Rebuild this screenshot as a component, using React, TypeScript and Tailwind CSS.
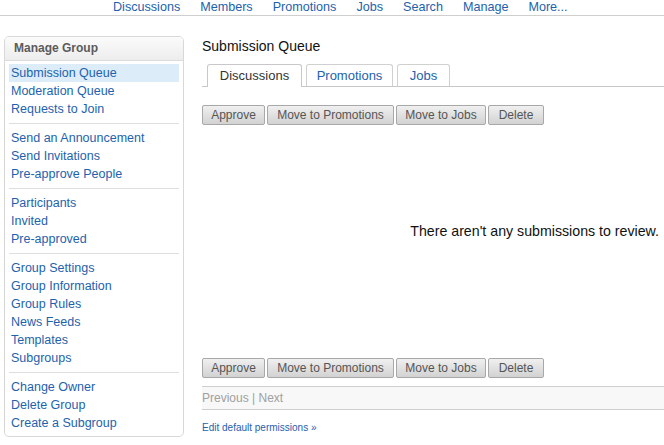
import React from "react";

const navItems = ["Discussions", "Members", "Promotions", "Jobs", "Search", "Manage", "More..."];

const groups = [
  ["Submission Queue", "Moderation Queue", "Requests to Join"],
  ["Send an Announcement", "Send Invitations", "Pre-approve People"],
  ["Participants", "Invited", "Pre-approved"],
  ["Group Settings", "Group Information", "Group Rules", "News Feeds", "Templates", "Subgroups"],
  ["Change Owner", "Delete Group", "Create a Subgroup"],
];

function ActionButtons() {
  const btn =
    "h-[20px] border border-[#a8a8a8] rounded-[2px] bg-gradient-to-b from-[#f0f0f0] to-[#d2d2d2] text-[12px] leading-[18px] text-[#555] text-center";
  return (
    <div className="flex gap-[2px]">
      <button className={`${btn} w-[63px]`}>Approve</button>
      <button className={`${btn} w-[127px]`}>Move to Promotions</button>
      <button className={`${btn} w-[90px]`}>Move to Jobs</button>
      <button className={`${btn} w-[56px]`}>Delete</button>
    </div>
  );
}

export default function App() {
  return (
    <div className="w-[664px] h-[445px] overflow-hidden bg-white font-['Liberation_Sans',Arial,sans-serif]">
      <nav className="h-[16px] border-b border-[#cfcfcf] flex gap-[20px] pl-[113px] text-[12.6px] leading-[14px] text-[#1d62ad]">
        {navItems.map((n) => (
          <a key={n} href="#" className="hover:underline">
            {n}
          </a>
        ))}
      </nav>

      <div className="flex pt-[20px] pl-[4px]">
        <aside className="w-[180px] h-[401px] shrink-0 border border-[#d8d8d8] rounded-[5px] overflow-hidden">
          <div className="h-[24px] border-b border-[#dcdcdc] bg-gradient-to-b from-[#fbfbfb] to-[#ededed] pl-[9px] text-[12px] font-bold leading-[23px] text-[#5b5b5b]">
            Manage Group
          </div>
          <div className="px-[4px] pt-[3px]">
            {groups.map((g, gi) => (
              <div key={gi}>
                {gi > 0 && <div className="my-[5px] h-px bg-[#dedede]" />}
                {g.map((item) => (
                  <a
                    key={item}
                    href="#"
                    className={`block h-[18px] pl-[2px] text-[12.5px] leading-[18px] text-[#1d62ad] ${
                      item === "Submission Queue" ? "bg-[#dcedf9]" : ""
                    }`}
                  >
                    {item}
                  </a>
                ))}
              </div>
            ))}
          </div>
        </aside>

        <main className="ml-[18px] flex-1">
          <h1 className="h-[20px] text-[14px] leading-[20px] text-[#111]">Submission Queue</h1>

          <div className="mt-[8px] flex items-end gap-[4px] pl-[5px] border-b border-[#c8c8c8] h-[23px]">
            <div className="w-[95px] h-[23px] -mb-px border border-b-0 border-[#c8c8c8] rounded-t-[3px] bg-white text-center text-[13px] leading-[22px] text-[#333]">
              Discussions
            </div>
            <a href="#" className="w-[87px] h-[22px] border border-b-0 border-[#d0d0d0] rounded-t-[3px] bg-white text-center text-[13px] leading-[22px] text-[#1d62ad]">
              Promotions
            </a>
            <a href="#" className="w-[53px] h-[22px] border border-b-0 border-[#d0d0d0] rounded-t-[3px] bg-white text-center text-[13px] leading-[22px] text-[#1d62ad]">
              Jobs
            </a>
          </div>

          <div className="mt-[18px]">
            <ActionButtons />
          </div>

          <div className="h-[233px] pt-[96px] pr-[5px] text-right text-[14.2px] leading-[20px] text-[#111]">
            There aren't any submissions to review.
          </div>

          <ActionButtons />

          <div className="mt-[8px] h-[24px] border-y border-[#cfcfcf] bg-[#f8f8f8] text-[12px] leading-[22px] text-[#a0a0a0]">
            Previous | Next
          </div>

          <a href="#" className="block mt-[12px] text-[10px] leading-[12px] text-[#1d62ad]">
            Edit default permissions »
          </a>
        </main>
      </div>
    </div>
  );
}
